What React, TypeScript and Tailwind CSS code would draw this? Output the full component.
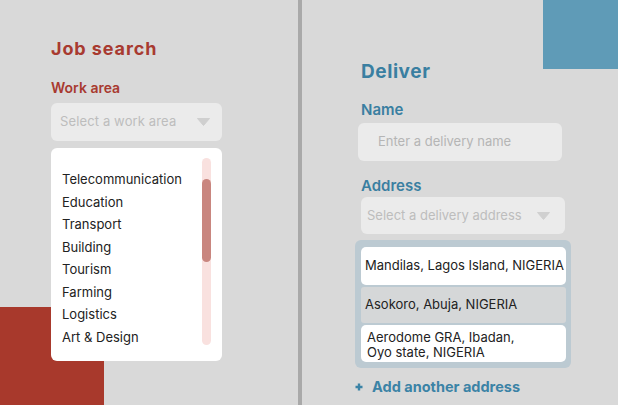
import React from "react";

const Tri = ({ color }: { color: string }) => (
  <svg width="13" height="8" viewBox="0 0 13 8">
    <path d="M0.5 0.5 L12.5 0.5 L6.5 7.5 Z" fill={color} stroke={color} strokeLinejoin="round" />
  </svg>
);

export default function App() {
  const areas = [
    "Telecommunication",
    "Education",
    "Transport",
    "Building",
    "Tourism",
    "Farming",
    "Logistics",
    "Art & Design",
  ];
  return (
    <div className="relative w-[618px] h-[405px] bg-[#d9d9d9] overflow-hidden flex font-['Inter',sans-serif]">
      <div className="absolute left-0 top-[307px] w-[104px] h-[98px] bg-[#a8392c]" />
      <div className="absolute right-0 top-0 w-[75px] h-[69px] bg-[#5f9bb7]" />

      {/* Left panel */}
      <div className="relative z-10 w-[298px] pl-[51px] pt-[37px] flex flex-col">
        <div className="text-[18px] leading-[24px] font-bold tracking-[0.05em] text-[#a83a30]">Job search</div>
        <div className="mt-[17px] text-[14px] leading-[20px] font-semibold text-[#a83a30]">Work area</div>
        <div className="mt-[5px] w-[171px] h-[38px] rounded-[6px] bg-[#ebebeb] flex items-center justify-between pl-[9px] pr-[12px]">
          <span className="text-[13px] tracking-[0.01em] text-[#bdbdbd]">Select a work area</span>
          <Tri color="#cfcfcf" />
        </div>
        <div className="mt-[7px] w-[171px] h-[213px] rounded-[6px] bg-white flex justify-between">
          <div className="pt-[20px] pl-[11px] flex flex-col text-[13px] leading-[22.5px] text-[#222]">
            {areas.map((a) => (
              <span key={a}>{a}</span>
            ))}
          </div>
          <div className="pt-[10px] pr-[11px]">
            <div className="w-[9px] h-[187px] rounded-full bg-[#f9e1df] pt-[21px]">
              <div className="w-[9px] h-[83px] rounded-full bg-[#c9867f]" />
            </div>
          </div>
        </div>
      </div>

      {/* Divider */}
      <div className="w-[4px] h-full bg-[#a9a9a9]" />

      {/* Right panel */}
      <div className="relative z-10 flex-1 pl-[53px] pt-[60px] flex flex-col">
        <div className="ml-[6px] text-[19px] leading-[24px] font-bold tracking-[0.03em] text-[#3a7fa1]">Deliver</div>
        <div className="ml-[6px] mt-[16px] text-[15px] leading-[20px] font-semibold text-[#3a7fa1]">Name</div>
        <div className="ml-[3px] mt-[3px] w-[204px] h-[38px] rounded-[6px] bg-[#ebebeb] flex items-center pl-[20px]">
          <span className="text-[13px] text-[#b5b5b5]">Enter a delivery name</span>
        </div>
        <div className="ml-[6px] mt-[15px] text-[15px] leading-[20px] font-semibold text-[#3a7fa1]">Address</div>
        <div className="ml-[6px] mt-[1px] w-[204px] h-[37px] rounded-[6px] bg-[#ebebeb] flex items-center justify-between pl-[6px] pr-[15px]">
          <span className="text-[13px] text-[#bdbdbd]">Select a delivery address</span>
          <Tri color="#d0d0d0" />
        </div>
        <div className="mt-[6px] w-[216px] h-[128px] rounded-[6px] bg-[#bccad2] pt-[7px] pl-[6px] pr-[5px] flex flex-col gap-[2px]">
          <div className="h-[38px] rounded-[5px] bg-white flex items-center pl-[4px] text-[13px] text-[#222] whitespace-nowrap">
            Mandilas, Lagos Island, NIGERIA
          </div>
          <div className="h-[36px] rounded-[3px] bg-[#d5d7d8] flex items-center pl-[4px] text-[13px] text-[#222]">
            Asokoro, Abuja, NIGERIA
          </div>
          <div className="h-[37px] rounded-[5px] bg-white overflow-hidden pt-[5px] pl-[6px] text-[13px] leading-[15px] text-[#222]">
            Aerodome GRA, Ibadan,
            <br />
            Oyo state, NIGERIA
          </div>
        </div>
        <div className="mt-[9px] flex items-center text-[14.5px] leading-[20px] font-bold text-[#3b83a6]">
          <svg width="8" height="8" viewBox="0 0 8 8" className="mr-[9px]">
            <path d="M4 0.5 V7.5 M0.5 4 H7.5" stroke="#3b83a6" strokeWidth="2.4" />
          </svg>
          <span>Add another address</span>
        </div>
      </div>
    </div>
  );
}
